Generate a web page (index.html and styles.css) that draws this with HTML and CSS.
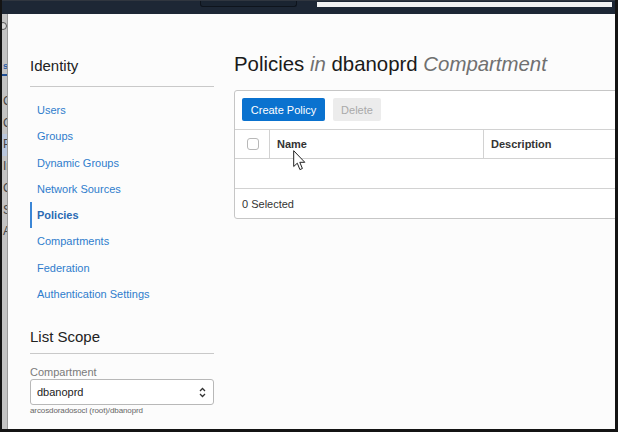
FILE: index.html
```html
<!DOCTYPE html>
<html>
<head>
<meta charset="utf-8">
<link rel="stylesheet" href="styles.css">
</head>
<body>
<div class="frame">
  <div class="topbar">
    <div class="search"></div>
    <div class="urlbar"></div>
  </div>
  <div class="body">
    <div class="strip">
      <div class="knob"></div>
      <div class="sl sl-s">s</div>
      <div class="sl-dash"></div>
      <div class="sl-list">
        <div class="sl">C</div>
        <div class="sl">C</div>
        <div class="sl sl-hi">P</div>
        <div class="sl">In</div>
        <div class="sl">C</div>
        <div class="sl">S</div>
        <div class="sl">A</div>
      </div>
    </div>
    <div class="content">
      <aside class="sidebar">
        <h2 class="side-title">Identity</h2>
        <nav class="nav">
          <a class="nav-item">Users</a>
          <a class="nav-item">Groups</a>
          <a class="nav-item">Dynamic Groups</a>
          <a class="nav-item">Network Sources</a>
          <a class="nav-item active">Policies</a>
          <a class="nav-item">Compartments</a>
          <a class="nav-item">Federation</a>
          <a class="nav-item">Authentication Settings</a>
        </nav>
        <h2 class="side-title scope">List Scope</h2>
        <div class="field-label">Compartment</div>
        <div class="select">
          <span>dbanoprd</span>
          <svg class="chev" width="7" height="11" viewBox="0 0 7 11"><path d="M1 4 L3.5 1.5 L6 4 M1 7 L3.5 9.5 L6 7" fill="none" stroke="#333" stroke-width="1.3"/></svg>
        </div>
        <div class="path">arcosdoradosocl (root)/dbanoprd</div>
      </aside>
      <main class="main">
        <h1 class="title">Policies <i>in</i> dbanoprd <i>Compartment</i></h1>
        <div class="panel">
          <div class="toolbar">
            <button class="btn primary">Create Policy</button>
            <button class="btn disabled">Delete</button>
          </div>
          <div class="thead">
            <div class="th th-check"><span class="checkbox"></span></div>
            <div class="th th-name">Name</div>
            <div class="th th-desc">Description</div>
          </div>
          <div class="tbody"></div>
          <div class="tfoot">0 Selected</div>
        </div>
        <svg class="cursor" width="13" height="21" viewBox="0 0 13 21"><path d="M0.7 0.7 L0.7 16.5 L4.3 13.2 L6.9 19.6 L9.4 18.5 L6.8 12.3 L11.8 12.3 Z" fill="#fff" stroke="#222" stroke-width="1" stroke-linejoin="round"/></svg>
      </main>
    </div>
  </div>
</div>
</body>
</html>
```
FILE: styles.css
```css
* { box-sizing: border-box; }
html, body { margin: 0; padding: 0; }
body { width: 618px; height: 432px; overflow: hidden; font-family: "Liberation Sans", Arial, sans-serif; }

.frame {
  width: 618px; height: 432px;
  border-left: 2px solid #141414;
  border-right: 3px solid #141414;
  border-bottom: 3px solid #141414;
  display: flex; flex-direction: column;
  background: #141414;
}
.topbar {
  height: 14px; flex: none;
  background: #1d2735;
  display: flex; align-items: flex-start;
  border-top: 1px solid #30363f;
}
.search {
  margin-left: 198px; width: 97px; height: 6px;
  border: 1px solid #0e141c; border-top: none;
  border-radius: 0 0 3px 3px;
  background: #1a2431;
}
.urlbar {
  margin-left: 20px; margin-top: 1px; flex: 1; height: 5px;
  background: #f2f2f2;
  margin-right: 3px;
}
.body { flex: 1; display: flex; min-height: 0; }

.strip {
  width: 6px; flex: none; overflow: hidden;
  background: #c3c3c3;
  border-right: 1px solid #9a9a9a;
  display: flex; flex-direction: column;
}
.knob {
  width: 8px; height: 8px; margin: 8px 0 0 -3px;
  border-radius: 50%; border: 1px solid #555; background: #d8d8d8;
}
.sl {
  font-size: 12px; line-height: 21.7px; color: #444; padding-left: 1px; white-space: nowrap;
}
.sl-s { margin-top: 29px; line-height: 14px; color: #2a5fa8; font-weight: bold; font-size: 9px; }
.sl-dash { width: 6px; height: 2px; background: #1f4f95; margin-top: 1px; }
.sl-list { margin-top: 15px; }
.sl-hi { background: #b9c6dc; }

.content {
  flex: 1; min-width: 0; overflow: hidden;
  background: #fcfcfc;
  display: flex;
  padding-left: 22px;
  position: relative;
}
.sidebar { width: 184px; flex: none; padding-top: 43px; }
.side-title {
  margin: 0; font-weight: normal; font-size: 15px; line-height: 18px; color: #222;
  padding-bottom: 11px; border-bottom: 1px solid #c9c9c9;
}
.side-title.scope { margin-top: 21px; padding-bottom: 7px; }
.nav { display: flex; flex-direction: column; margin-top: 10px; }
.nav-item {
  display: block; font-size: 11px; line-height: 26.3px; color: #2f7ccc;
  padding-left: 5px; border-left: 2px solid transparent; cursor: pointer;
}
.nav-item.active { color: #2b6ab3; font-weight: bold; border-left-color: #3b86d6; }
.field-label { font-size: 11px; line-height: 14px; color: #7a7a7a; margin-top: 11px; }
.select {
  height: 26px;
  border: 1px solid #b8b8b8; border-radius: 3px; background: #fff;
  display: flex; align-items: center; justify-content: space-between;
  padding: 0 7px 0 6px;
  font-size: 11px; color: #222;
}
.chev { flex: none; }
.path { font-size: 8px; line-height: 12px; color: #666; letter-spacing: -0.1px; }

.main { flex: 1; min-width: 0; margin-left: 20px; padding-top: 38px; position: relative; }
.title {
  margin: 0; font-weight: normal; font-size: 20.4px; line-height: 24px; color: #1a1a1a; white-space: nowrap;
}
.title i { color: #707070; }
.panel {
  margin-top: 14px; width: 420px;
  border: 1px solid #c6c6c6; border-radius: 3px;
  background: #fff;
}
.toolbar { display: flex; gap: 8px; padding: 7px 7px 8px; }
.btn {
  height: 23px; border: none; border-radius: 2px; font-family: inherit;
  font-size: 11px; padding: 0;
}
.btn.primary { width: 83px; background: #0a72cf; color: #fff; }
.btn.disabled { width: 48px; background: #ececec; color: #a9a9a9; }
.thead {
  display: flex; height: 30px; border-top: 1px solid #d2d2d2; border-bottom: 1px solid #d2d2d2;
}
.th { display: flex; align-items: center; font-size: 11px; font-weight: bold; color: #333; }
.th-check { width: 35px; border-right: 1px solid #d2d2d2; padding-left: 12px; }
.checkbox { width: 12px; height: 12px; border: 1px solid #b8b8b8; border-radius: 3px; background: #fff; }
.th-name { width: 214px; padding-left: 7px; border-right: 1px solid #d2d2d2; }
.th-desc { padding-left: 7px; }
.tbody { height: 30px; border-bottom: 1px solid #d2d2d2; }
.tfoot { height: 29px; display: flex; align-items: center; padding-left: 7px; font-size: 11px; color: #333; }

.cursor { position: absolute; left: 59px; top: 136px; }
```
